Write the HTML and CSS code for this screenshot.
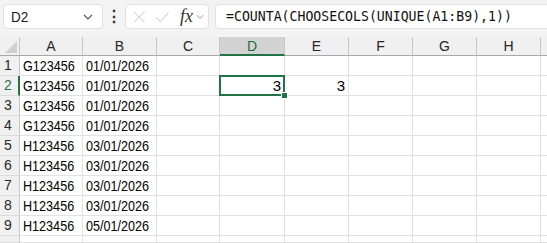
FILE: index.html
```html
<!DOCTYPE html>
<html>
<head>
  <meta charset="UTF-8">
  <title>Sheet1</title>
  <link rel="stylesheet" href="styles.css">
</head>
<body>
  <div class="toolbar">
    <div class="name-box">
      <span class="name-text">D2</span>
      <svg class="chevron" width="10" height="6" viewBox="0 0 10 6"><path d="M1 1 L5 5 L9 1" fill="none" stroke="#555" stroke-width="1.1"/></svg>
    </div>
    <div class="kebab">⋮</div>
    <div class="func-box">
      <svg class="icon" width="14" height="14" viewBox="0 0 14 14"><path d="M1 1 L13 13 M13 1 L1 13" fill="none" stroke="#c4c4c4" stroke-width="1.1"/></svg>
      <svg class="icon" width="16" height="14" viewBox="0 0 16 14"><path d="M1 7 L6 12 L15 2" fill="none" stroke="#c4c4c4" stroke-width="1.1"/></svg>
      <span class="fx">fx</span>
      <svg class="chevron-sm" width="9" height="6" viewBox="0 0 9 6"><path d="M1 1 L4.5 4.5 L8 1" fill="none" stroke="#888" stroke-width="1"/></svg>
    </div>
    <div class="formula-box">=COUNTA(CHOOSECOLS(UNIQUE(A1:B9),1))</div>
  </div>

  <div class="sheet">
    <div class="corner"><span class="corner-tri"></span></div>
    <div class="col-head">A</div>
    <div class="col-head">B</div>
    <div class="col-head">C</div>
    <div class="col-head selected">D</div>
    <div class="col-head">E</div>
    <div class="col-head">F</div>
    <div class="col-head">G</div>
    <div class="col-head">H</div>
    <div class="col-head"></div>

    <div class="row-head">1</div><div class="cell"><span class="txt">G123456</span></div><div class="cell"><span class="txt">01/01/2026</span></div><div class="cell"></div><div class="cell"></div><div class="cell"></div><div class="cell"></div><div class="cell"></div><div class="cell"></div><div class="cell"></div>
    <div class="row-head selected">2</div><div class="cell"><span class="txt">G123456</span></div><div class="cell"><span class="txt">01/01/2026</span></div><div class="cell"></div><div class="cell num active">3</div><div class="cell num">3</div><div class="cell"></div><div class="cell"></div><div class="cell"></div><div class="cell"></div>
    <div class="row-head">3</div><div class="cell"><span class="txt">G123456</span></div><div class="cell"><span class="txt">01/01/2026</span></div><div class="cell"></div><div class="cell"></div><div class="cell"></div><div class="cell"></div><div class="cell"></div><div class="cell"></div><div class="cell"></div>
    <div class="row-head">4</div><div class="cell"><span class="txt">G123456</span></div><div class="cell"><span class="txt">01/01/2026</span></div><div class="cell"></div><div class="cell"></div><div class="cell"></div><div class="cell"></div><div class="cell"></div><div class="cell"></div><div class="cell"></div>
    <div class="row-head">5</div><div class="cell"><span class="txt">H123456</span></div><div class="cell"><span class="txt">03/01/2026</span></div><div class="cell"></div><div class="cell"></div><div class="cell"></div><div class="cell"></div><div class="cell"></div><div class="cell"></div><div class="cell"></div>
    <div class="row-head">6</div><div class="cell"><span class="txt">H123456</span></div><div class="cell"><span class="txt">03/01/2026</span></div><div class="cell"></div><div class="cell"></div><div class="cell"></div><div class="cell"></div><div class="cell"></div><div class="cell"></div><div class="cell"></div>
    <div class="row-head">7</div><div class="cell"><span class="txt">H123456</span></div><div class="cell"><span class="txt">03/01/2026</span></div><div class="cell"></div><div class="cell"></div><div class="cell"></div><div class="cell"></div><div class="cell"></div><div class="cell"></div><div class="cell"></div>
    <div class="row-head">8</div><div class="cell"><span class="txt">H123456</span></div><div class="cell"><span class="txt">03/01/2026</span></div><div class="cell"></div><div class="cell"></div><div class="cell"></div><div class="cell"></div><div class="cell"></div><div class="cell"></div><div class="cell"></div>
    <div class="row-head">9</div><div class="cell"><span class="txt">H123456</span></div><div class="cell"><span class="txt">05/01/2026</span></div><div class="cell"></div><div class="cell"></div><div class="cell"></div><div class="cell"></div><div class="cell"></div><div class="cell"></div><div class="cell"></div>
    <div class="row-head"></div><div class="cell"></div><div class="cell"></div><div class="cell"></div><div class="cell"></div><div class="cell"></div><div class="cell"></div><div class="cell"></div><div class="cell"></div><div class="cell"></div>
  </div>
</body>
</html>
```

FILE: styles.css
```css
body {
  margin: 0;
  width: 547px;
  height: 243px;
  overflow: hidden;
  background: #fff;
  font-family: "Liberation Sans", Arial, sans-serif;
  color: #000;
}
.toolbar {
  display: flex;
  align-items: center;
  height: 37px;
  padding: 0 0 4px 3px;
  box-sizing: border-box;
  background: #f3f3f3;
}
.name-box {
  display: flex;
  align-items: center;
  justify-content: space-between;
  width: 100px;
  height: 25px;
  box-sizing: border-box;
  padding: 0 9px 0 7px;
  background: #fff;
  border: 1px solid #e0e0e0;
  border-radius: 4px;
  font-size: 15px;
}
.name-text {
  color: #1a1a1a;
  display: inline-block;
  transform: scaleX(0.9);
  transform-origin: left;
}
.kebab {
  width: 22px;
  text-align: center;
  font-size: 16px;
  font-weight: bold;
  color: #333;
}
.func-box {
  display: flex;
  align-items: center;
  width: 84px;
  height: 25px;
  box-sizing: border-box;
  padding: 0 4px 0 7px;
  background: #fff;
  border: 1px solid #e0e0e0;
  border-radius: 4px;
}
.func-box .icon {
  margin-right: 9px;
}
.fx {
  font-family: "Liberation Serif", "Times New Roman", serif;
  font-style: italic;
  font-size: 18px;
  color: #333;
  margin-left: 2px;
  margin-right: 3px;
}
.formula-box {
  flex: 1;
  height: 25px;
  line-height: 23px;
  box-sizing: border-box;
  margin-left: 6px;
  margin-right: -6px;
  padding-left: 10px;
  background: #fff;
  border: 1px solid #e0e0e0;
  border-radius: 4px;
  font-family: "DejaVu Sans Mono", "Liberation Mono", monospace;
  font-size: 13.2px;
  color: #111;
  white-space: nowrap;
  overflow: hidden;
}
.sheet {
  display: grid;
  grid-template-columns: 20px 63px 74px 63px 65px 64px 64px 64px 64px 1fr;
  grid-template-rows: 19px repeat(9, 20px) 7px;
  height: 206px;
  overflow: hidden;
}
.corner,
.col-head {
  background: #f0f0f0;
  border-bottom: 1px solid #a8a8a8;
  border-right: 1px solid #c6c6c6;
  box-sizing: border-box;
  font-size: 14px;
  text-align: center;
  line-height: 18px;
  color: #262626;
}
.corner {
  position: relative;
}
.corner-tri {
  position: absolute;
  right: 2px;
  bottom: 2px;
  width: 0;
  height: 0;
  border-left: 12px solid transparent;
  border-bottom: 12px solid #cfcfcf;
}
.col-head.selected {
  background: #d3d3d3;
  color: #1e6e43;
  border-bottom: 2px solid #217346;
}
.row-head {
  background: #f0f0f0;
  border-right: 1px solid #c6c6c6;
  border-bottom: 1px solid #dcdcdc;
  box-sizing: border-box;
  font-size: 14px;
  line-height: 19px;
  padding-left: 4px;
  color: #262626;
}
.row-head.selected {
  color: #2f6b4a;
  border-right: 2px solid #217346;
}
.cell {
  border-right: 1px solid #e1e1e1;
  border-bottom: 1px solid #e1e1e1;
  box-sizing: border-box;
  font-size: 15px;
  line-height: 19px;
  padding: 0 3px;
  white-space: nowrap;
  overflow: hidden;
}
.cell .txt {
  display: inline-block;
  transform: scaleX(0.84);
  transform-origin: left;
}
.cell.num {
  text-align: right;
}
.cell.active {
  position: relative;
  overflow: visible;
}
.cell.active::after {
  content: "";
  position: absolute;
  left: -1px;
  top: -1px;
  right: -1px;
  bottom: -1px;
  border: 2px solid #217346;
}
.cell.active::before {
  content: "";
  position: absolute;
  right: -4px;
  bottom: -4px;
  width: 5px;
  height: 5px;
  background: #217346;
  border: 1px solid #fff;
  z-index: 1;
}
```
